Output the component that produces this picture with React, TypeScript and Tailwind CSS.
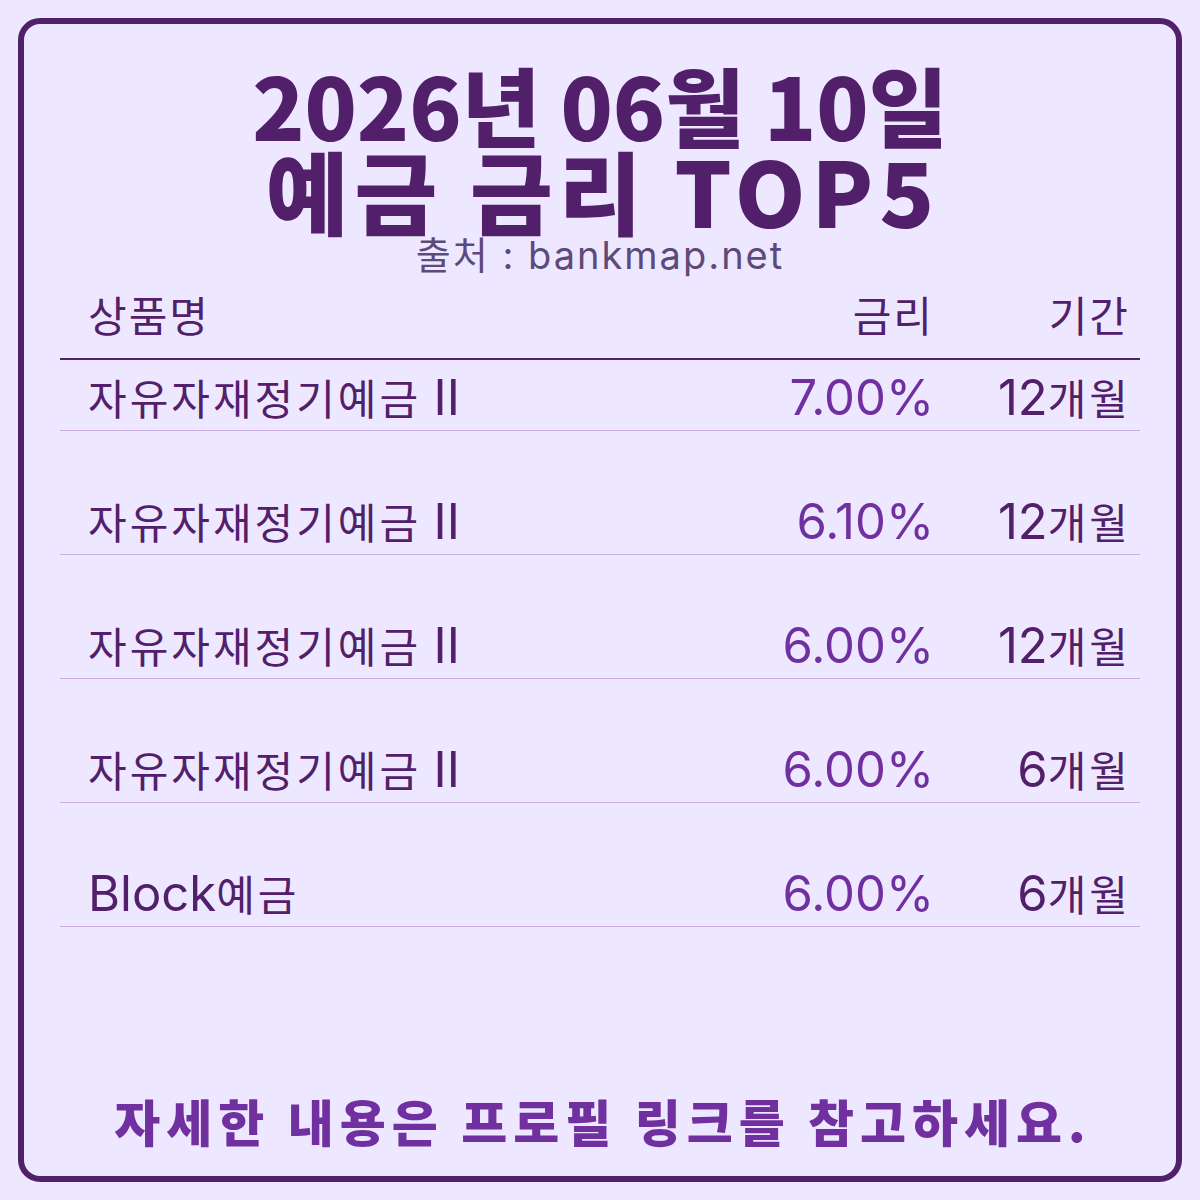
const rows = [
  { name: "자유자재정기예금 II", rate: "7.00%", term: "12개월" },
  { name: "자유자재정기예금 II", rate: "6.10%", term: "12개월" },
  { name: "자유자재정기예금 II", rate: "6.00%", term: "12개월" },
  { name: "자유자재정기예금 II", rate: "6.00%", term: "6개월" },
  { name: "Block예금", rate: "6.00%", term: "6개월" },
];

const kr = { fontFamily: '"Noto Sans CJK KR", "Noto Sans", sans-serif' };
const latin = { fontFamily: 'Inter, "Noto Sans CJK KR", sans-serif' };

// latin runs a bit larger so digits match the hangul height
function Mixed({ text }: { text: string }) {
  const parts = text.split(/([A-Za-z0-9.%]+)/).filter(Boolean);
  return (
    <>
      {parts.map((p, i) =>
        /[A-Za-z0-9]/.test(p) ? (
          <span key={i} className="text-[49px]" style={latin}>{p}</span>
        ) : (
          <span key={i} className="tracking-[3px]">{p}</span>
        )
      )}
    </>
  );
}

export default function App() {
  return (
    <div className="w-[1200px] h-[1200px] bg-[#ede8ff] p-[18px]" style={kr}>
      <div className="h-full border-[6px] border-[#52206a] rounded-[22px] flex flex-col">
        <div className="flex flex-col items-center pt-[45px]">
          <h1 className="text-[86px] leading-[70px] font-black text-[#52206a]">2026년 06월 10일</h1>
          <h2 className="text-[90px] leading-[76px] font-black text-[#52206a] tracking-[6px] pl-[6px] mt-[12px]">예금 금리 TOP5</h2>
          <p className="text-[38px] leading-[40px] text-[#5e4a7a] tracking-[2px] mt-[8px]" style={latin}>출처 : bankmap.net</p>
        </div>

        <div className="mx-[36px] mt-[15px]">
          <div className="grid grid-cols-[1fr_200px_206px] items-end text-[42px] leading-[48px] text-[#52206a] pb-[20px] border-b-2 border-[#52206a]">
            <span className="pl-[28px] tracking-[2px]">상품명</span>
            <span className="text-right tracking-[2px]">금리</span>
            <span className="text-right pr-[10px] tracking-[2px]">기간</span>
          </div>
          {rows.map((r, i) => (
            <div
              key={i}
              className={`grid grid-cols-[1fr_200px_206px] items-end text-[42px] leading-[48px] pb-[8px] border-b border-[#c9aee6] ${i === 0 ? "h-[71px]" : "h-[124px]"}`}
            >
              <span className="pl-[28px] text-[#52206a]"><Mixed text={r.name} /></span>
              <span className="text-right text-[#7030a0] text-[49px]" style={latin}>{r.rate}</span>
              <span className="text-right pr-[9px] text-[#52206a]"><Mixed text={r.term} /></span>
            </div>
          ))}
        </div>

        <div className="mt-auto pb-[26px] text-center text-[50px] leading-[60px] font-black text-[#7030a0] tracking-[6px] pl-[6px]">
          자세한 내용은 프로필 링크를 참고하세요.
        </div>
      </div>
    </div>
  );
}
